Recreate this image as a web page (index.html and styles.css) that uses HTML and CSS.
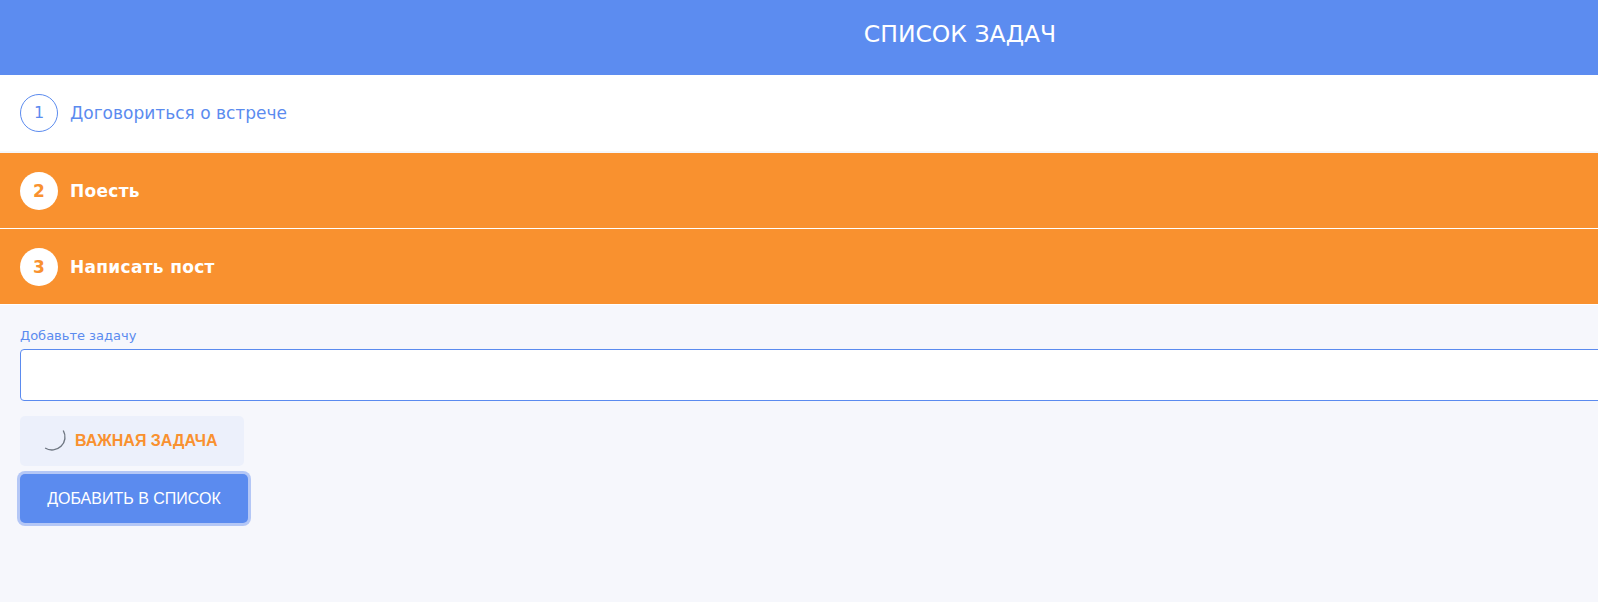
FILE: index.html
```html
<!DOCTYPE html>
<html lang="ru">
<head>
<meta charset="utf-8">
<title>Список задач</title>
<link rel="stylesheet" href="styles.css">
</head>
<body>
<div class="app">
  <header class="header">СПИСОК ЗАДАЧ</header>
  <ul class="tasks">
    <li class="task task--plain"><span class="num">1</span><span class="title">Договориться о встрече</span></li>
    <li class="task task--important"><span class="num">2</span><span class="title">Поесть</span></li>
    <li class="task task--important"><span class="num">3</span><span class="title">Написать пост</span></li>
  </ul>
  <form class="form">
    <label class="label" for="task">Добавьте задачу</label>
    <input class="input" id="task" type="text">
    <button type="button" class="important-btn">
      <svg class="spinner" width="30" height="30" viewBox="0 0 30 30"><path d="M26.26 8.5 A13 13 0 0 1 8.11 26.02" fill="none" stroke="#6f7782" stroke-width="1.4"/></svg>
      <span>ВАЖНАЯ ЗАДАЧА</span>
    </button>
    <button type="button" class="add-btn">ДОБАВИТЬ В СПИСОК</button>
  </form>
</div>
</body>
</html>
```
FILE: styles.css
```css
html, body {
  margin: 0;
  padding: 0;
  overflow: hidden;
  background: #f6f7fc;
}
.app {
  width: 1920px;
  min-height: 602px;
  font-family: "DejaVu Sans", Verdana, sans-serif;
  background: #f6f7fc;
}
.header {
  height: 75px;
  box-sizing: border-box;
  padding-top: 20px;
  background: #5c8cf0;
  color: #fff;
  font-size: 23.5px;
  line-height: 28px;
  text-align: center;
}
.tasks {
  list-style: none;
  margin: 0;
  padding: 0;
}
.task {
  display: flex;
  align-items: center;
  height: 75px;
  border-bottom: 1px solid #fff;
  padding-left: 20px;
  box-sizing: content-box;
}
.task--plain {
  background: #fff;
  margin-bottom: 2px;
  color: #5b8bef;
}
.task--important {
  background: #f9912f;
  color: #fff;
  font-weight: bold;
}
.num {
  width: 38px;
  height: 38px;
  box-sizing: border-box;
  border-radius: 50%;
  display: flex;
  align-items: center;
  justify-content: center;
  font-size: 16px;
  margin-right: 12px;
}
.task--plain .num {
  border: 1px solid #5b8bef;
}
.task--important .num {
  background: #fff;
  color: #f9912f;
  font-size: 17px;
}
.title {
  font-size: 17px;
  margin-top: 1px;
}
.task--important .title {
  letter-spacing: 0.3px;
}
.form {
  display: flex;
  flex-direction: column;
  align-items: flex-start;
  padding: 23px 20px 0;
}
.label {
  font-size: 13px;
  line-height: 16px;
  color: #5b8bef;
  margin-bottom: 5px;
}
.input {
  width: 100%;
  height: 52px;
  box-sizing: border-box;
  border: 1px solid #5b8bef;
  border-radius: 4px;
  background: #fff;
  margin: 0 0 15px;
}
.important-btn {
  display: flex;
  align-items: center;
  width: 224px;
  height: 50px;
  padding: 0 0 1px 17px;
  margin: 0 0 8px;
  border: none;
  border-radius: 5px;
  background: #ecf0fb;
  font-family: "Liberation Sans", Arial, sans-serif;
  font-weight: bold;
  font-size: 16px;
  color: #f9912f;
}
.spinner {
  margin: 0 8px 8px 0;
}
.add-btn {
  width: 228px;
  height: 49px;
  padding: 0;
  border: none;
  border-radius: 5px;
  background: #5b8bef;
  box-shadow: 0 0 0 3px #b4c7f6;
  color: #fff;
  font-family: "Liberation Sans", Arial, sans-serif;
  font-size: 16px;
}
```
